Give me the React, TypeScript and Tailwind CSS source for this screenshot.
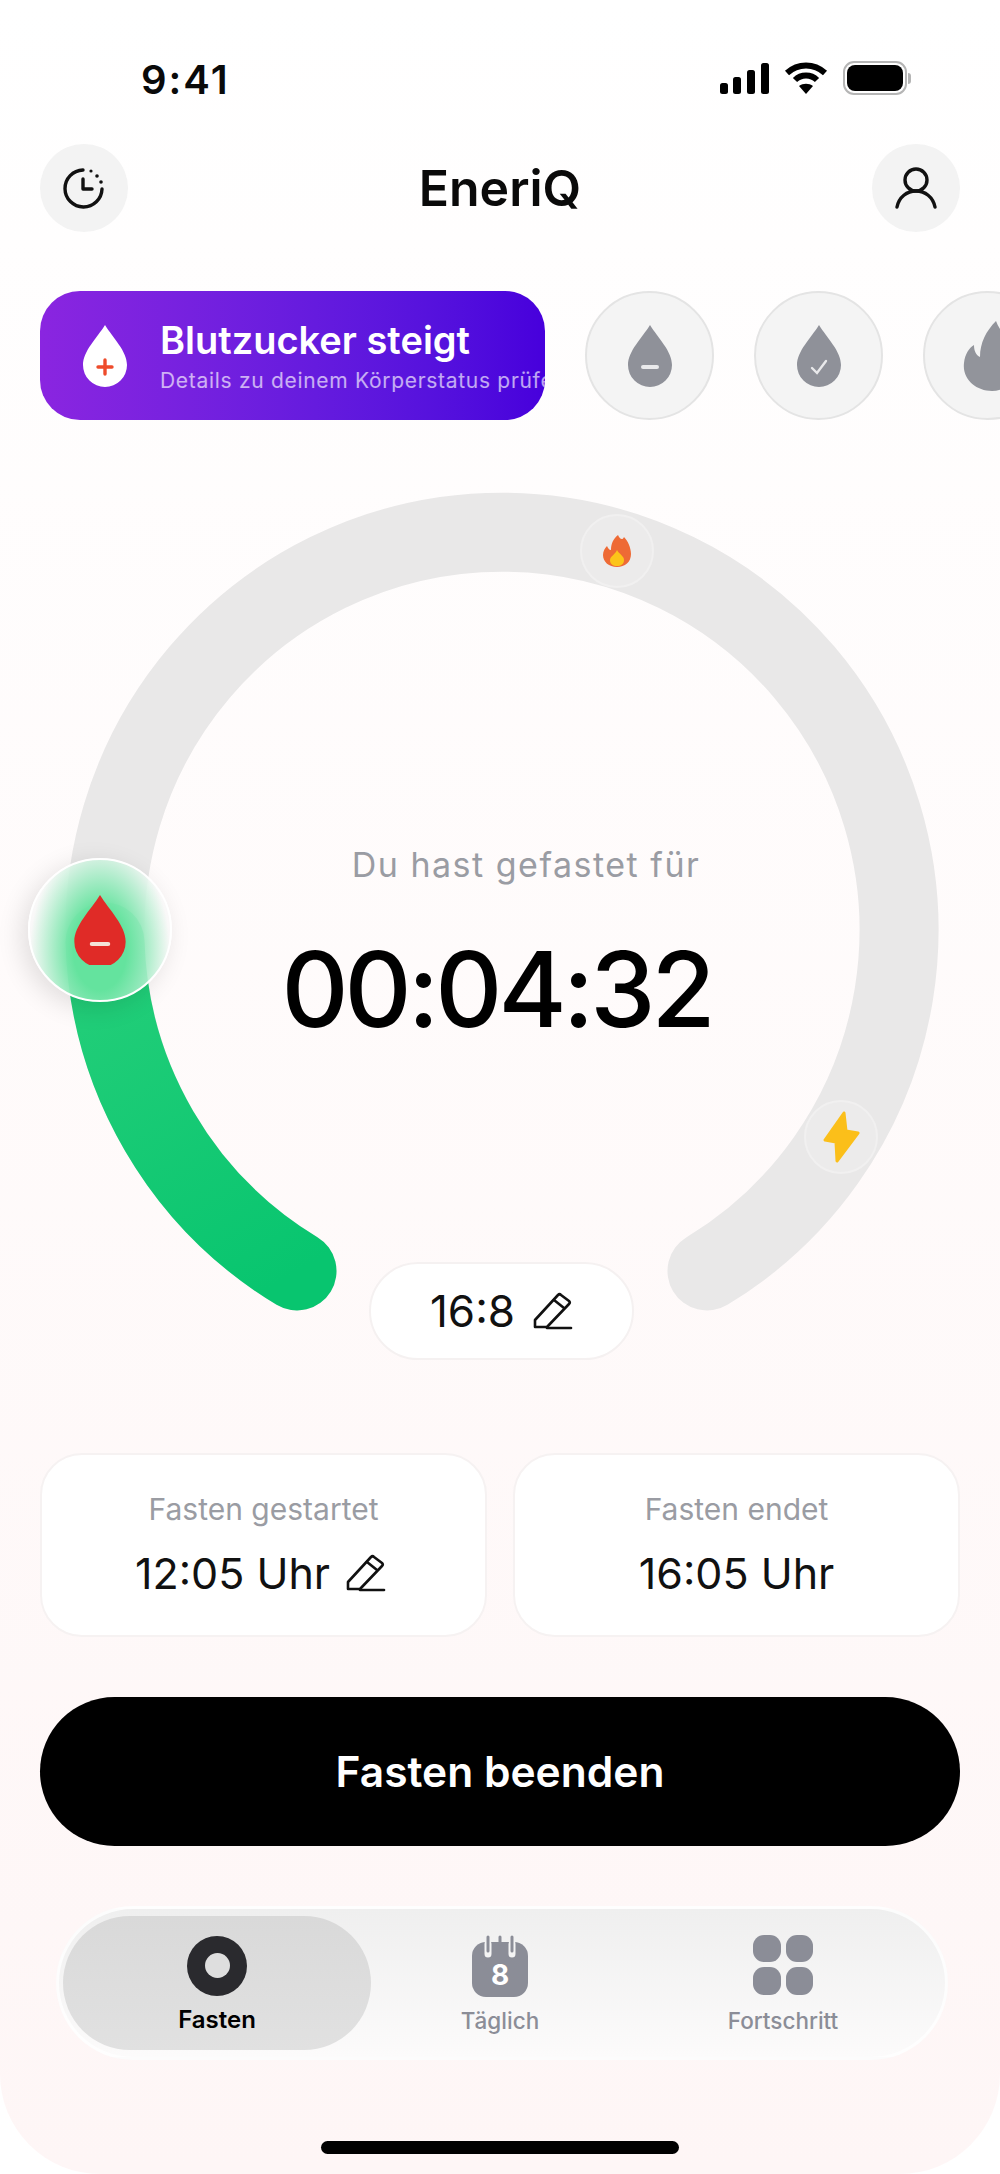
import React from "react";

const DROP = "M22 0C30 13 44 26 44 40A22 22 0 0 1 0 40C0 26 14 13 22 0Z";

const Drop: React.FC<{ fill: string; children?: React.ReactNode }> = ({ fill, children }) => (
  <svg className="shrink-0" width="44" height="62" viewBox="0 0 44 62">
    <path d={DROP} fill={fill} />
    {children}
  </svg>
);

const PencilIcon: React.FC = () => (
  <svg width="40" height="38" viewBox="0 0 40 38" fill="none" stroke="#111" strokeWidth="2.6" strokeLinecap="round" strokeLinejoin="round">
    <path d="M2 35V28L25 3C26 2 27 2 28 3L36 9C37 10 37 11 36 12L14 35H2Z" />
    <path d="M21 8L31 16" />
    <path d="M14 36H38" />
  </svg>
);

const StatusBar: React.FC = () => (
  <div className="flex h-[144px] shrink-0 items-start justify-between pl-[141px] pr-[89px] pt-[58px]">
    <span className="text-[40px] leading-[44px] font-semibold tracking-[2px] text-[#0a0a0a]">9:41</span>
    <div className="-mt-[3px] flex items-center gap-[15px] pt-[6px]">
      <svg width="49" height="31" viewBox="0 0 49 31" fill="#000">
        <rect x="0" y="20" width="8" height="11" rx="2.5" />
        <rect x="13" y="14" width="8" height="17" rx="2.5" />
        <rect x="27" y="7" width="8" height="24" rx="2.5" />
        <rect x="41" y="0" width="8" height="31" rx="2.5" />
      </svg>
      <svg width="44" height="32" viewBox="0 0 44 32" fill="none" stroke="#000" strokeWidth="6">
        <path d="M3 11C14 1 30 1 41 11" />
        <path d="M11 18C17 12 27 12 33 18" />
        <path d="M22 32L15 24C19 21 25 21 29 24Z" fill="#000" stroke="none" />
      </svg>
      <div className="flex items-center">
        <div className="flex h-[34px] w-[64px] items-center justify-center rounded-[11px] border-2 border-[#b5b5b5]">
          <div className="h-[26px] w-[56px] rounded-[8px] bg-black" />
        </div>
        <div className="ml-[1px] h-[11px] w-[3px] rounded-r-full bg-[#b5b5b5]" />
      </div>
    </div>
  </div>
);

const Header: React.FC = () => (
  <div className="flex h-[88px] shrink-0 items-center justify-between px-[40px]">
    <div className="flex h-[88px] w-[88px] items-center justify-center rounded-full bg-[#f3f3f3]">
      <svg width="44" height="44" viewBox="0 0 44 44" fill="none" stroke="#111" strokeWidth="3.4" strokeLinecap="round" strokeLinejoin="round">
        <path d="M21 4A18.5 18.5 0 1 0 40 23" />
        <path d="M21 13V23H30" />
        <circle cx="29" cy="5" r="1.6" fill="#111" stroke="none" />
        <circle cx="35" cy="10" r="1.8" fill="#111" stroke="none" />
        <circle cx="39" cy="16" r="1.8" fill="#111" stroke="none" />
      </svg>
    </div>
    <span className="text-[50px] leading-none font-semibold text-[#0a0a0a]">EneriQ</span>
    <div className="flex h-[88px] w-[88px] items-center justify-center rounded-full bg-[#f3f3f3]">
      <svg width="42" height="42" viewBox="0 0 42 42" fill="none" stroke="#111" strokeWidth="3.4" strokeLinecap="round">
        <circle cx="21" cy="13" r="11" />
        <path d="M2 40C4 30 12 24 21 24C30 24 38 30 40 40" />
      </svg>
    </div>
  </div>
);

const StatusCircle: React.FC<{ children: React.ReactNode }> = ({ children }) => (
  <div className="flex h-[129px] w-[129px] shrink-0 items-center justify-center rounded-full border-2 border-[#e4e4e4] bg-[#f4f4f4]">
    {children}
  </div>
);

const BodyStatusRow: React.FC = () => (
  <div className="mt-[59px] flex h-[129px] shrink-0 gap-[40px] overflow-hidden pl-[40px]">
    <div className="flex h-[129px] w-[505px] shrink-0 items-center overflow-hidden rounded-[40px] bg-linear-to-r from-[#8a25e0] to-[#4700dc] pl-[43px]">
      <Drop fill="#fff">
        <path d="M22 35V49M15 42H29" stroke="#ee4b2b" strokeWidth="3.4" strokeLinecap="round" />
      </Drop>
      <div className="ml-[33px] flex flex-col whitespace-nowrap">
        <span className="text-[38px] leading-[44px] font-semibold text-white">Blutzucker steigt</span>
        <span className="mt-[6px] text-[21px] leading-[26px] tracking-[0.7px] text-white/65">Details zu deinem Körperstatus prüfen</span>
      </div>
    </div>
    <StatusCircle>
      <Drop fill="#8f9199">
        <path d="M15 42H29" stroke="#fff" strokeOpacity="0.8" strokeWidth="4" strokeLinecap="round" />
      </Drop>
    </StatusCircle>
    <StatusCircle>
      <Drop fill="#8f9199">
        <path d="M15 43L20 48L29 36" fill="none" stroke="#fff" strokeOpacity="0.8" strokeWidth="2.4" strokeLinecap="round" />
      </Drop>
    </StatusCircle>
    <StatusCircle>
      <svg className="ml-[10px]" width="70" height="70" viewBox="0 0 70 70" fill="#92949b">
        <path d="M38 0C42 12 56 22 60 38C64 56 50 70 34 70C18 70 4 58 6 42C7 33 11 27 16 24C16 30 18 34 22 36C22 22 28 10 38 0Z" />
      </svg>
    </StatusCircle>
  </div>
);

const RingMarker: React.FC<{ className: string; children: React.ReactNode }> = ({ className, children }) => (
  <div className={"absolute flex h-[74px] w-[74px] items-center justify-center rounded-full border-2 border-[#f1f0f0] bg-[#ecebeb] " + className}>
    {children}
  </div>
);

const FastingRing: React.FC = () => (
  <div className="relative h-[1033px] shrink-0">
    <svg className="block" width="1000" height="1033" viewBox="0 0 1000 1033" fill="none">
      <defs>
        <linearGradient id="greenArc" gradientUnits="userSpaceOnUse" x1="100" y1="508" x2="300" y2="850">
          <stop offset="0" stopColor="#26cf7a" />
          <stop offset="1" stopColor="#08c56f" />
        </linearGradient>
      </defs>
      <path d="M297 851A397 398 0 1 1 707 851" stroke="#e9e8e8" strokeWidth="79" strokeLinecap="round" />
      <path d="M297 851A397 398 0 0 1 105 522" stroke="url(#greenArc)" strokeWidth="79" strokeLinecap="round" />
    </svg>

    <RingMarker className="left-[580px] top-[94px]">
      <svg width="28" height="32" viewBox="0 0 28 32">
        <path d="M15 0C17 5 20 5 21 2C25 6 28 13 28 19C28 27 22 32 14 32C6 32 0 27 0 20C0 16 2 13 4 11C5 13 6 15 8 15C8 9 10 4 15 0Z" fill="#ee6a35" />
        <path d="M14 15C16 19 21 21 21 25C21 29 18 31 14 31C10 31 7 29 7 25C7 21 12 20 14 15Z" fill="#fcc419" />
      </svg>
    </RingMarker>
    <RingMarker className="left-[804px] top-[680px]">
      <svg width="37" height="52" viewBox="0 0 37 52">
        <path d="M21 2L2 29L13 31L14 50L35 22L23 20Z" fill="#fbbf1a" stroke="#fbbf1a" strokeWidth="3" strokeLinejoin="round" />
      </svg>
    </RingMarker>

    {/* current phase knob */}
    <div className="absolute left-[28px] top-[438px] flex h-[144px] w-[144px] items-center justify-center rounded-full border-2 border-white bg-[#f8f8f8]/80 bg-[radial-gradient(ellipse_50%_76%_at_50%_64%,#64e39e_38%,rgba(100,227,158,0)_100%)] shadow-[-6px_6px_26px_rgba(0,0,0,0.12)]">
      <svg width="52" height="70" viewBox="0 0 44 60">
        <path d={DROP} fill="#e02b27" />
        <path d="M15 42H29" stroke="#f4e3d8" strokeWidth="3.6" strokeLinecap="round" />
      </svg>
    </div>

    <div className="absolute inset-x-0 top-[424px] flex flex-col items-center">
      <span className="ml-[52px] text-[34px] leading-[42px] tracking-[1.5px] text-[#9a9ca3]">Du hast gefastet für</span>
      <span className="mr-[7px] mt-[43px] text-[104px] leading-[120px] font-medium tracking-[-4px] text-black">00:04:32</span>
    </div>

    <div className="absolute left-[369px] top-[842px] flex h-[98px] w-[265px] items-center justify-center gap-[18px] rounded-full border-2 border-[#f5f1f1] bg-white">
      <span className="text-[44px] leading-none text-[#111]">16:8</span>
      <PencilIcon />
    </div>
  </div>
);

const TimeCard: React.FC<{ label: string; value: string; edit?: boolean }> = ({ label, value, edit }) => (
  <div className="flex h-[184px] flex-col items-center rounded-[42px] border-2 border-[#f6f2f2] bg-white pt-[35px]">
    <span className="text-[30px] leading-[38px] text-[#9a9ca3]">{label}</span>
    <div className={"mt-[22px] flex items-center gap-[16px] " + (edit ? "mr-[6px]" : "")}>
      <span className="text-[43px] leading-[46px] text-[#111]">{value}</span>
      {edit && <PencilIcon />}
    </div>
  </div>
);

const NavBar: React.FC = () => (
  <div className="ml-[56px] mr-[52px] mt-[60px] flex h-[154px] shrink-0 items-center rounded-full border-[3px] border-white/80 bg-linear-to-b from-[#efefef] to-[#fcfbfb] pl-[4px]">
    <div className="flex h-[134px] w-[308px] flex-col items-center justify-center rounded-full bg-linear-to-b from-[#d9d9d9] to-[#e1e1e1] pt-[5px]">
      <div className="flex h-[60px] w-[60px] items-center justify-center rounded-full bg-[#2a2a2e]">
        <div className="h-[25px] w-[25px] rounded-full bg-[#dedede]" />
      </div>
      <span className="mt-[8px] text-[24px] leading-[32px] font-semibold text-black">Fasten</span>
    </div>
    <div className="flex w-[258px] flex-col items-center pt-[5px]">
      <svg width="56" height="62" viewBox="0 0 56 62">
        <rect x="0" y="7" width="56" height="55" rx="14" fill="#8b8d97" />
        <path d="M16 9V19M40 9V19" stroke="#f4f4f4" strokeWidth="7" strokeLinecap="round" />
        <path d="M16 2V16M28 2V9M40 2V16" stroke="#8b8d97" strokeWidth="3" strokeLinecap="round" />
        <text x="28" y="50" textAnchor="middle" fontFamily="Inter, sans-serif" fontWeight="700" fontSize="28" fill="#fff">8</text>
      </svg>
      <span className="mt-[8px] text-[22.5px] leading-[32px] font-medium text-[#8b8d97]">Täglich</span>
    </div>
    <div className="flex w-[304px] flex-col items-center pt-[5px]">
      <div className="ml-[4px] grid h-[60px] w-[60px] grid-cols-2 gap-[5px]">
        <div className="rounded-[11px] bg-[#8b8d97]" />
        <div className="rounded-[11px] bg-[#8b8d97]" />
        <div className="rounded-[11px] bg-[#8b8d97]" />
        <div className="rounded-[11px] bg-[#8b8d97]" />
      </div>
      <span className="ml-[4px] mt-[10px] text-[22.5px] leading-[32px] font-medium text-[#8b8d97]">Fortschritt</span>
    </div>
  </div>
);

const App: React.FC = () => (
  <div className="h-[2174px] w-[1000px] overflow-hidden bg-white font-['Inter',sans-serif]">
    <div className="flex h-full flex-col rounded-b-[100px] bg-linear-to-b from-white to-[#fef6f6]">
      <StatusBar />
      <Header />
      <BodyStatusRow />
      <FastingRing />
      <div className="grid shrink-0 grid-cols-2 gap-[26px] px-[40px]">
        <TimeCard label="Fasten gestartet" value="12:05 Uhr" edit />
        <TimeCard label="Fasten endet" value="16:05 Uhr" />
      </div>
      <button className="mx-[40px] mt-[60px] flex h-[149px] shrink-0 items-center justify-center rounded-full bg-black text-[42.5px] font-semibold text-white" type="button">
        Fasten beenden
      </button>
      <NavBar />
      <div className="mx-auto mt-[81px] h-[13px] w-[358px] shrink-0 rounded-full bg-black" />
    </div>
  </div>
);

export default App;
